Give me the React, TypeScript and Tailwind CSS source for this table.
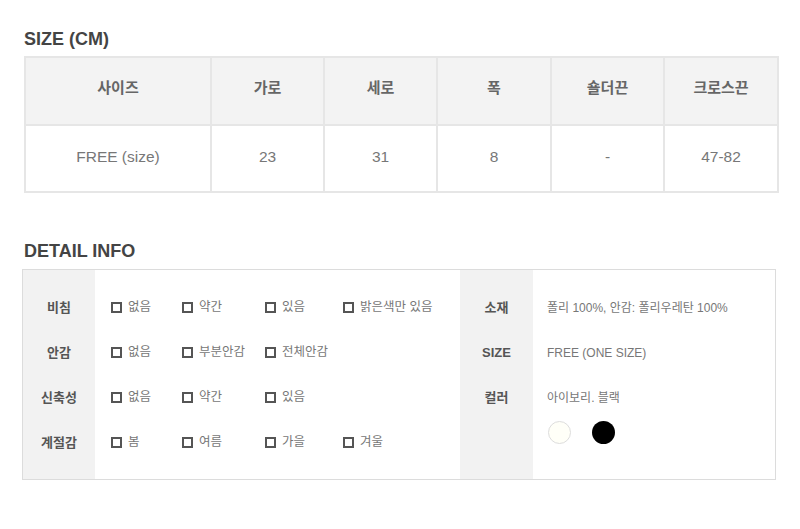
import React from "react"

const font = "font-['Liberation_Sans','Noto_Sans_CJK_KR',sans-serif]"

const sizeHead = ["사이즈", "가로", "세로", "폭", "숄더끈", "크로스끈"]
const sizeBody = ["FREE (size)", "23", "31", "8", "-", "47-82"]

const options = [
  { label: "비침", items: ["없음", "약간", "있음", "밝은색만 있음"] },
  { label: "안감", items: ["없음", "부분안감", "전체안감"] },
  { label: "신축성", items: ["없음", "약간", "있음"] },
  { label: "계절감", items: ["봄", "여름", "가을", "겨울"] },
]

function Check({ text }: { text: string }) {
  return (
    <div className="flex items-center gap-[6px]">
      <span className="w-[11px] h-[11px] border-2 border-[#555] shrink-0"></span>
      <span className="text-[12.5px] text-[#777]">{text}</span>
    </div>
  )
}

export default function App() {
  return (
    <div className={`${font} bg-white w-[800px] h-[529px] pl-[24px] pt-[28px]`}>
      <h2 className="text-[18px] font-bold text-[#444] leading-[22px]">SIZE (CM)</h2>

      {/* size table */}
      <table className="mt-[6px] w-[753px] border-collapse border-2 border-[#e6e6e6] table-fixed">
        <colgroup>
          <col className="w-[186px]" />
          <col className="w-[113px]" />
          <col className="w-[113px]" />
          <col className="w-[114px]" />
          <col className="w-[113px]" />
          <col className="w-[114px]" />
        </colgroup>
        <thead>
          <tr className="bg-[#f3f3f3] h-[68px]">
            {sizeHead.map((h) => (
              <th key={h} className="border-2 border-[#e6e6e6] text-[15px] font-bold text-[#666] pb-[6px]">
                {h}
              </th>
            ))}
          </tr>
        </thead>
        <tbody>
          <tr className="h-[67px]">
            {sizeBody.map((v, i) => (
              <td key={i} className="border-2 border-[#e6e6e6] text-center text-[15.5px] text-[#777] pb-[4px]">
                {v}
              </td>
            ))}
          </tr>
        </tbody>
      </table>

      <h2 className="mt-[47px] text-[18px] font-bold text-[#444] leading-[22px]">DETAIL INFO</h2>

      {/* detail info */}
      <div className="mt-[7px] -ml-[2px] w-[754px] h-[211px] border border-[#dcdcdc] flex">
        <div className="w-[72px] bg-[#f2f2f2] pt-[15px]">
          {options.map((o) => (
            <div key={o.label} className="h-[45px] flex items-center justify-center text-[13px] font-bold text-[#555]">
              {o.label}
            </div>
          ))}
        </div>
        <div className="w-[365px] pt-[15px] pl-[16px]">
          {options.map((o) => (
            <div key={o.label} className="h-[45px] grid grid-cols-[71px_83px_78px_auto] items-center">
              {o.items.map((t) => (
                <Check key={t} text={t} />
              ))}
            </div>
          ))}
        </div>
        <div className="w-[73px] bg-[#f2f2f2] pt-[15px]">
          {["소재", "SIZE", "컬러"].map((l) => (
            <div key={l} className="h-[45px] flex items-center justify-center text-[13px] font-bold text-[#555]">
              {l}
            </div>
          ))}
        </div>
        <div className="flex-1 pt-[15px] pl-[14px] text-[12px] text-[#777]">
          <div className="h-[45px] flex items-center">폴리 100%, 안감: 폴리우레탄 100%</div>
          <div className="h-[45px] flex items-center">FREE (ONE SIZE)</div>
          <div className="h-[45px] flex items-center">아이보리. 블랙</div>
          <div className="flex gap-[21px] pt-[1px] pl-[1px]">
            <span className="w-[23px] h-[23px] rounded-full bg-[#fffff8] border border-[#ddd]"></span>
            <span className="w-[23px] h-[23px] rounded-full bg-black"></span>
          </div>
        </div>
      </div>
    </div>
  )
}
